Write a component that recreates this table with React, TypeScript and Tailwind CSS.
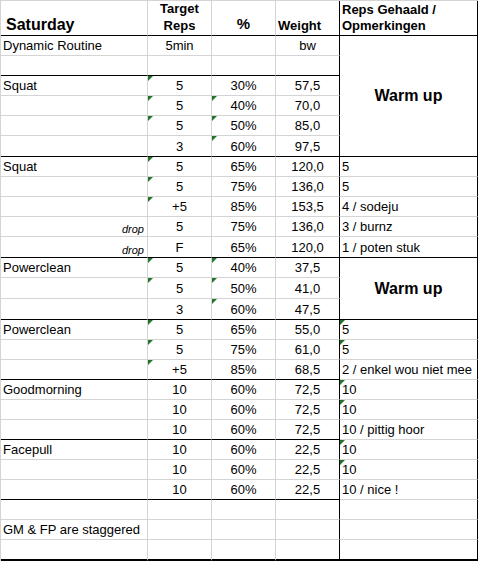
import React from 'react';

type Row = {
  a?: string;
  drop?: boolean;
  b?: string;
  c?: string;
  d?: string;
  e?: string;
  tri?: string[];
  black?: boolean;
  eBlack?: boolean;
  warm?: 6 | 3;
  skipE?: boolean;
  last?: boolean;
};

const rows: Row[] = [
  { a: 'Dynamic Routine', b: '5min', d: 'bw', warm: 6 },
  { black: true, skipE: true },
  { a: 'Squat', b: '5', c: '30%', d: '57,5', tri: ['b'], skipE: true },
  { b: '5', c: '40%', d: '70,0', tri: ['b', 'c'], skipE: true },
  { b: '5', c: '50%', d: '85,0', tri: ['b', 'c'], skipE: true },
  { b: '3', c: '60%', d: '97,5', tri: ['c'], black: true, skipE: true },
  { a: 'Squat', b: '5', c: '65%', d: '120,0', e: '5', tri: ['b'] },
  { b: '5', c: '75%', d: '136,0', e: '5', tri: ['b'] },
  { b: '+5', c: '85%', d: '153,5', e: '4 / sodeju', tri: ['b'] },
  { drop: true, b: '5', c: '75%', d: '136,0', e: '3 / burnz' },
  { drop: true, b: 'F', c: '65%', d: '120,0', e: '1 / poten stuk', black: true, eBlack: true },
  { a: 'Powerclean', b: '5', c: '40%', d: '37,5', tri: ['b', 'c'], warm: 3 },
  { b: '5', c: '50%', d: '41,0', tri: ['b', 'c'], skipE: true },
  { b: '3', c: '60%', d: '47,5', tri: ['c'], black: true, skipE: true },
  { a: 'Powerclean', b: '5', c: '65%', d: '55,0', e: '5', tri: ['b', 'e'] },
  { b: '5', c: '75%', d: '61,0', e: '5', tri: ['b', 'e'] },
  { b: '+5', c: '85%', d: '68,5', e: '2 / enkel wou niet mee', tri: ['b'], black: true },
  { a: 'Goodmorning', b: '10', c: '60%', d: '72,5', e: '10', tri: ['e'] },
  { b: '10', c: '60%', d: '72,5', e: '10', tri: ['e'] },
  { b: '10', c: '60%', d: '72,5', e: '10 / pittig hoor', black: true },
  { a: 'Facepull', b: '10', c: '60%', d: '22,5', e: '10', tri: ['e'] },
  { b: '10', c: '60%', d: '22,5', e: '10', tri: ['e'] },
  { b: '10', c: '60%', d: '22,5', e: '10 / nice !', black: true },
  {},
  { a: 'GM & FP are staggered' },
  { last: true },
];

function Tri() {
  return (
    <span className="absolute left-0 top-0 w-0 h-0 border-t-[5px] border-r-[5px] border-t-[#25732a] border-r-transparent" />
  );
}

export default function App() {
  return (
    <div className="w-[480px] h-[561px] bg-white text-black font-['Liberation_Sans',Arial,sans-serif] text-[13px] overflow-hidden">
      <div className="grid w-[478px] border-l border-t border-[#d4d4d4] grid-cols-[147px_64px_64px_64px_138px] grid-rows-[35px_20px_20px_20px_20px_20px_21px_20px_20px_20px_20px_21px_20px_21px_21px_20px_20px_20px_20px_20px_20px_20px_20px_20px_20px_20px_21px]">
        {/* header */}
        <div className="flex items-end border-b border-r border-b-black border-r-[#d4d4d4] pl-[5px]">
          <span className="text-[16px] font-bold leading-[20px]">Saturday</span>
        </div>
        <div className="flex items-end justify-center border-b border-r border-b-black border-r-[#d4d4d4] pb-px">
          <span className="font-bold leading-[17px] text-center">Target<br />Reps</span>
        </div>
        <div className="flex items-end justify-center border-b border-r border-b-black border-r-[#d4d4d4] pb-px">
          <span className="text-[15px] font-bold leading-[20px]">%</span>
        </div>
        <div className="flex items-end border-b border-r border-b-black border-r-black pb-px pl-[2px]">
          <span className="font-bold leading-[17px]">Weight</span>
        </div>
        <div className="flex items-start border-b border-r border-black pl-[2px] pt-px">
          <span className="font-bold leading-[16px]">Reps Gehaald /<br />Opmerkingen</span>
        </div>

        {rows.map((r, i) => {
          const bb = r.last
            ? 'border-b-2 border-b-black'
            : r.black
              ? 'border-b border-b-black'
              : 'border-b border-b-[#d4d4d4]';
          const eb = r.last
            ? 'border-b-2 border-b-black'
            : r.eBlack
              ? 'border-b border-b-black'
              : 'border-b border-b-[#d4d4d4]';
          const t = r.tri || [];
          return (
            <React.Fragment key={i}>
              <div className={`flex items-end border-r border-r-[#d4d4d4] ${bb} ${r.drop ? 'justify-end pr-[3px]' : 'pl-[2px]'}`}>
                {r.drop ? (
                  <span className="italic text-[11px] leading-[14px]">drop</span>
                ) : (
                  <span className="leading-[18px] whitespace-nowrap">{r.a}</span>
                )}
              </div>
              <div className={`relative flex items-end justify-center border-r border-r-[#d4d4d4] ${bb}`}>
                {t.includes('b') && <Tri />}
                <span className="leading-[18px]">{r.b}</span>
              </div>
              <div className={`relative flex items-end justify-center border-r border-r-[#d4d4d4] ${bb}`}>
                {t.includes('c') && <Tri />}
                <span className="leading-[18px]">{r.c}</span>
              </div>
              <div className={`flex items-end justify-center border-r border-r-black ${bb}`}>
                <span className="leading-[18px]">{r.d}</span>
              </div>
              {r.warm === 6 && (
                <div className="row-span-6 flex items-center justify-center border-r border-b border-black">
                  <span className="text-[16px] font-bold">Warm up</span>
                </div>
              )}
              {r.warm === 3 && (
                <div className="row-span-3 flex items-center justify-center border-r border-b border-black">
                  <span className="text-[16px] font-bold">Warm up</span>
                </div>
              )}
              {!r.warm && !r.skipE && (
                <div className={`relative flex items-end border-r border-r-black pl-[2px] ${eb}`}>
                  {t.includes('e') && <Tri />}
                  <span className="leading-[18px] whitespace-nowrap">{r.e}</span>
                </div>
              )}
            </React.Fragment>
          );
        })}
      </div>
    </div>
  );
}
